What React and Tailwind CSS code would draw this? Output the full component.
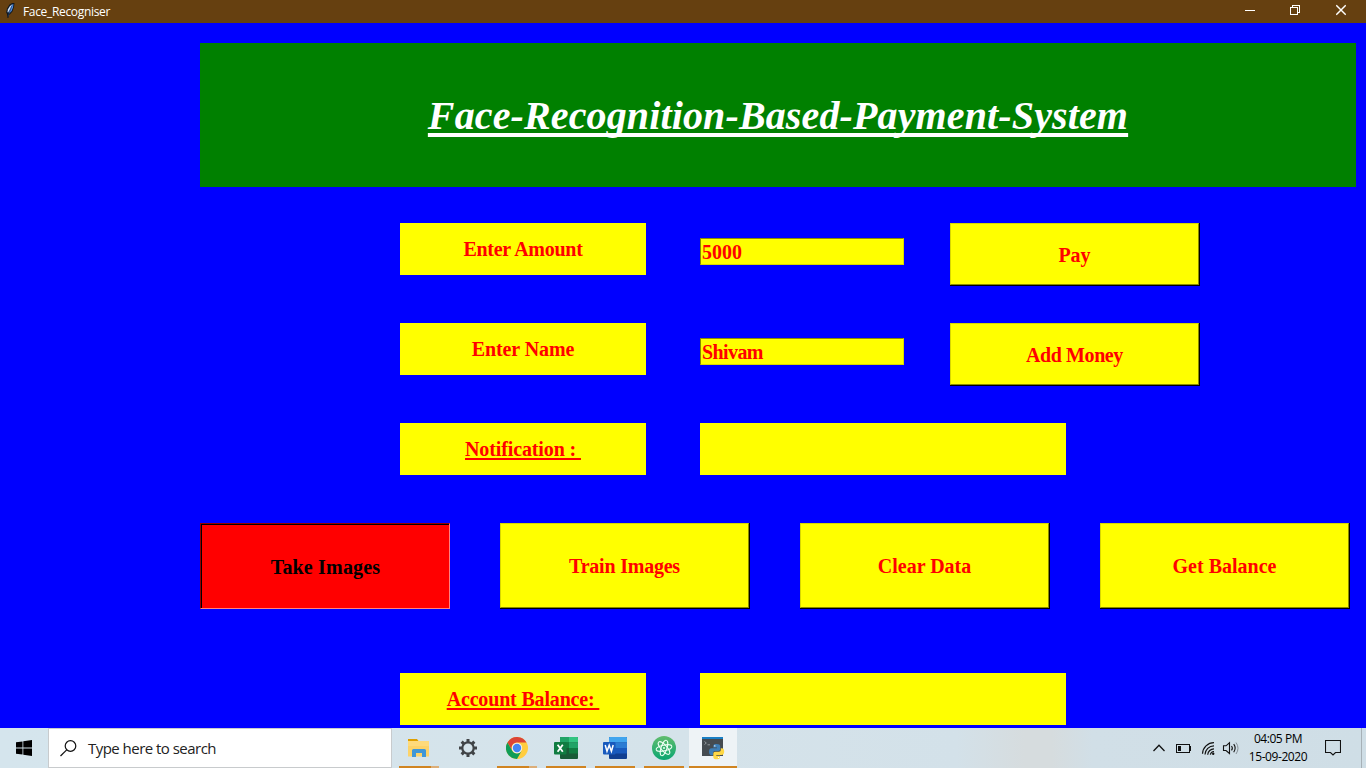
import React from "react";

const serif = "font-['Liberation_Serif',serif]";
const sans = "font-['Open_Sans','Noto_Sans',sans-serif]";

function Label({ children, underline, tracking = "" }) {
  return (
    <div className={"flex h-[52px] w-[246px] shrink-0 items-center justify-center bg-[#ffff00] text-[#ff0000] " + tracking}>
      <span className={underline ? "whitespace-pre underline decoration-2 underline-offset-2" : "whitespace-pre"}>{children}</span>
    </div>
  );
}

function Entry({ value, tracking = "" }) {
  return (
    <div
      className={
        "ml-[54px] mt-[15px] flex h-[27px] w-[204px] shrink-0 items-center border border-b-[#d8d800] border-l-[#8a8a00] border-r-[#d8d800] border-t-[#8a8a00] bg-[#ffff00] pl-px text-[#ff0000] " +
        tracking
      }
    >
      {value}
    </div>
  );
}

function Button({ children, tall, tracking = "" }) {
  return (
    <button
      className={
        (tall ? "h-[86px]" : "h-[63px]") +
        " w-[250px] shrink-0 border-b border-r border-black bg-[#ffff00] text-[#ff0000] " +
        tracking
      }
    >
      <span
        className={
          "flex h-full w-full items-center justify-center border border-b-[#8a8a00] border-l-[#d8d800] border-r-[#8a8a00] border-t-[#d8d800] " +
          (tall ? "" : "pt-[2px]")
        }
      >
        {children}
      </span>
    </button>
  );
}

function PressedButton({ children }) {
  return (
    <button className="h-[86px] w-[250px] shrink-0 border border-b-[#ff8080] border-l-[#900000] border-r-[#ff8080] border-t-[#900000] bg-[#ff0000] tracking-[0.18px] text-black">
      <span className="flex h-full w-full items-center justify-center border-l border-t border-black">
        {children}
      </span>
    </button>
  );
}

function Feather() {
  return (
    <svg width="12" height="20" viewBox="0 0 12 20" className="ml-1">
      <path d="M3.5 18 3 14 2.2 12.5 3 8.5 5.5 4.5 8 3H10.5L10 7 8.5 11.5 6 14.3 4.8 15 4.4 18Z" fill="#101820" />
      <path d="M7.5 5 9.4 4 9 7.5 7.6 11 5.2 13.6 4.6 13Z" fill="#4f8de0" />
      <path d="M3.4 12.3 4 9.2 6 6 8.3 4.2 6.8 7.6 4.3 12.2Z" fill="#cfe3ff" />
      <path d="M8 5.5 4 16.5" stroke="#1f3b68" strokeWidth=".7" />
    </svg>
  );
}

function TitleBar() {
  return (
    <header className="flex h-[23px] w-full bg-[#664010] text-white">
      <Feather />
      <span className={"ml-[7px] w-[120px] text-[12px] leading-[23px] tracking-[-0.33px] " + sans}>Face_Recogniser</span>
      <svg width="10" height="20" viewBox="0 0 10 20" className="ml-auto mr-[35px]" shapeRendering="crispEdges">
        <path d="M0 10.5H10" stroke="#fff" />
      </svg>
      <svg width="10" height="20" viewBox="0 0 10 20" className="mr-[36px]" fill="none" stroke="#fff" shapeRendering="crispEdges">
        <path d="M.5 7.5H7.5V14.5H.5ZM2.5 7.5V5.5H9.5V12.5H7.5" />
      </svg>
      <svg width="10" height="20" viewBox="0 0 10 20" className="mr-5" fill="none" stroke="#fff" strokeWidth="1.3">
        <path d="M.3 5.3 9.7 14.7M9.7 5.3.3 14.7" />
      </svg>
    </header>
  );
}

function FolderIcon() {
  return (
    <svg width="22" height="20" viewBox="0 0 22 20">
      <path d="M0 1H9L10.5 3H0Z" fill="#dfa000" />
      <path d="M0 3H21V18.5H0Z" fill="#fdd368" />
      <path d="M0 3H21V8H0Z" fill="#ffe089" opacity=".6" />
      <path d="M4 19V12.5Q4 11 5.5 11H16.5Q18 11 18 12.5V19H14V15H8V19Z" fill="#3f97d8" />
    </svg>
  );
}

function GearIcon() {
  return (
    <svg width="20" height="20" viewBox="0 0 20 20" fill="none" stroke="#404447">
      <circle cx="10" cy="10" r="5.7" strokeWidth="2.2" />
      <path
        d="M10 1V4.2M10 15.8V19M1 10H4.2M15.8 10H19M3.64 3.64 5.9 5.9M14.1 14.1 16.36 16.36M3.64 16.36 5.9 14.1M14.1 5.9 16.36 3.64"
        strokeWidth="3"
      />
    </svg>
  );
}

function ChromeIcon() {
  return (
    <svg width="22" height="22" viewBox="0 0 22 22">
      <circle cx="11" cy="11" r="11" fill="#ffcd40" />
      <path d="M1.47 5.5A11 11 0 0 1 20.53 5.5H11A5.5 5.5 0 0 0 6.24 13.75Z" fill="#db4437" />
      <path d="M1.47 5.5A11 11 0 0 0 11 22L15.76 13.75A5.5 5.5 0 0 1 6.24 13.75Z" fill="#109d58" />
      <circle cx="11" cy="11" r="5.2" fill="#f1f1f1" />
      <circle cx="11" cy="11" r="4.2" fill="#4285f4" />
    </svg>
  );
}

function ExcelIcon() {
  return (
    <svg width="24" height="22" viewBox="0 0 24 22">
      <rect x="6" y="0" width="18" height="22" rx="1" fill="#185c37" />
      <path d="M6 1Q6 0 7 0H15V5.5H6Z" fill="#21a366" />
      <path d="M15 0H23Q24 0 24 1V5.5H15Z" fill="#33c481" />
      <path d="M6 5.5H15V11H6Z" fill="#107c41" />
      <path d="M15 5.5H24V11H15Z" fill="#21a366" />
      <path d="M15 11H24V16.5H15Z" fill="#107c41" />
      <rect x="0" y="5" width="12.5" height="12.5" rx="1" fill="#107c41" />
      <path d="M3.6 7.8 8.8 14.8M8.8 7.8 3.6 14.8" stroke="#fff" strokeWidth="1.8" />
    </svg>
  );
}

function WordIcon() {
  return (
    <svg width="24" height="22" viewBox="0 0 24 22">
      <rect x="6" y="0" width="18" height="22" rx="1" fill="#103f91" />
      <path d="M6 1Q6 0 7 0H23Q24 0 24 1V5.5H6Z" fill="#41a5ee" />
      <path d="M6 5.5H24V11H6Z" fill="#2b7cd3" />
      <path d="M6 11H24V16.5H6Z" fill="#185abd" />
      <rect x="0" y="5" width="12.5" height="12.5" rx="1" fill="#185abd" />
      <path d="M2.2 8 4 14.3 6.2 8.2 8.4 14.3 10.2 8" stroke="#fff" strokeWidth="1.5" fill="none" />
    </svg>
  );
}

function AtomIcon() {
  return (
    <svg width="24" height="24" viewBox="0 0 24 24" fill="none" stroke="#edfff3" strokeWidth="1">
      <defs>
        <linearGradient id="atomFill" x2="0" y2="1">
          <stop stopColor="#61bd6e" />
          <stop offset="1" stopColor="#0aa671" />
        </linearGradient>
      </defs>
      <circle cx="12" cy="12" r="12" fill="url(#atomFill)" stroke="none" />
      <ellipse cx="12" cy="12" rx="8" ry="2.9" transform="rotate(-12 12 12)" />
      <ellipse cx="12" cy="12" rx="8" ry="2.9" transform="rotate(48 12 12)" />
      <ellipse cx="12" cy="12" rx="8" ry="2.9" transform="rotate(108 12 12)" />
      <circle cx="12" cy="12" r="1" fill="#edfff3" stroke="none" />
    </svg>
  );
}

function PythonWindowIcon() {
  return (
    <svg width="24" height="24" viewBox="0 0 24 24">
      <path d="M1 1H22V20H1Z" fill="#454b50" />
      <path d="M1 1H22V3H1Z" fill="#1a7fc4" />
      <path d="M3.5 5.5 5.3 7 3.5 8.5M6.5 8.8H9" stroke="#a5abaf" fill="none" strokeWidth=".8" />
      <path d="M15.5 8C12 8 12.3 9.6 12.3 11.5H16V12.3H10.8C8.5 12.3 8 14 8 15.8 8 18 9 19.2 10.5 19.2H12V17Q12 15 14 15H17.5Q19.2 15 19.2 13.3V10Q19.2 8 15.5 8Z" fill="#3e7eb5" />
      <path d="M15.7 23.3C19.2 23.3 19 21.8 19 19.8H15.3V19H20.5C22.5 19 23.2 17.4 23.2 15.5 23.2 13.4 22.4 12.2 20.8 12.2H19.8V14Q19.8 15.8 18 15.8H14Q12.3 15.8 12.3 17.5V21Q12.3 23.3 15.7 23.3Z" fill="#ffd845" />
      <circle cx="13.8" cy="9.9" r=".7" fill="#fff" />
      <circle cx="17.5" cy="21.4" r=".7" fill="#fff" />
    </svg>
  );
}

function TaskItem({ children, state }) {
  return (
    <div className={"flex h-10 w-12 flex-col items-center " + (state === "active" ? "bg-[#eef3f6]" : "")}>
      <div className="flex h-[38px] items-center pt-[2px]">{children}</div>
      {state === "grouped" && (
        <div className="flex h-[2px] w-10">
          <span className="h-full w-8 bg-[#d08421]" />
          <span className="h-full w-2 bg-[#dcae78]" />
        </div>
      )}
      {state === "open" && <div className="h-[2px] w-10 bg-[#d08421]" />}
      {state === "active" && <div className="h-[2px] w-12 bg-[#d08421]" />}
    </div>
  );
}

function Tray() {
  return (
    <div className="ml-auto flex h-10 w-[213px] items-center">
      <svg width="86" height="20" viewBox="0 0 86 20" fill="none" stroke="#111" strokeWidth="1.3">
        <path d="M.5 13 6 7.3 11.5 13" />
        <g shapeRendering="crispEdges">
          <path d="M23.5 6.5H36.5V14.5H23.5Z" strokeWidth="1" />
          <path d="M37 8.5H37.5V12.5H37" strokeWidth="1" />
          <path d="M25 8H28V13H25Z" fill="#111" stroke="none" />
        </g>
        <g strokeWidth="1.2">
          <path d="M49.5 15.8A11.5 11.5 0 0 1 61 4.7" />
          <path d="M52 16.5A9 9 0 0 1 61 7.8" />
          <path d="M54.7 16.7A6.3 6.3 0 0 1 61 10.8" />
          <path d="M57.3 16.7A4 4 0 0 1 61 13.5" />
        </g>
        <circle cx="60.2" cy="15.8" r="1.2" fill="#111" stroke="none" />
        <path d="M70.5 7.8H73L76.5 4.8V15.5L73 12.5H70.5Z" strokeWidth="1.1" />
        <path d="M78.5 8Q80.2 10 78.5 12.3M80.7 6.2Q83.6 10 80.7 14.2" strokeWidth="1.1" />
        <path d="M83 4.5Q87 10.2 83 16" strokeWidth="1" stroke="#899298" />
      </svg>
      <div className={"ml-1 w-[70px] pb-px text-center text-[12px] leading-[18px] text-black " + sans}>
        <div className="tracking-[-0.45px]">04:05 PM</div>
        <div className="tracking-[-0.42px]">15-09-2020</div>
      </div>
      <svg width="16" height="18" viewBox="0 0 16 18" className="ml-3" fill="none" stroke="#111" strokeWidth="1.1">
        <path d="M.5 1.5H15.5V13.5H10.5L8 16 5.5 13.5H.5Z" />
      </svg>
      <div className="ml-auto mr-1 h-10 w-px bg-[#a7b1b7]" />
    </div>
  );
}

function Taskbar() {
  return (
    <footer className="flex h-10 w-full items-start bg-[linear-gradient(90deg,#d5e5ed_0%,#d5e3ea_50%,#d3e1e9_70%,#d6dcde_75%,#d6dcde_77%,#d1dfe7_80%,#cfdee6_100%)]">
      <div className="flex h-10 w-12 items-center justify-center">
        <svg width="16" height="16" viewBox="0 0 16 16" fill="#000">
          <path d="M0 2.3 6.5 1.4V7.6H0ZM7.3 1.2 16 0V7.6H7.3ZM0 8.4H6.5V14.6L0 13.7ZM7.3 8.4H16V16L7.3 14.8Z" />
        </svg>
      </div>
      <div className="flex h-10 w-[344px] items-center border border-[#c8cbcd] bg-white">
        <svg width="17" height="17" viewBox="0 0 17 17" className="ml-[11px]" fill="none" stroke="#111" strokeWidth="1.2">
          <circle cx="10.5" cy="6" r="5.3" />
          <path d="M6.7 9.8.5 16" />
        </svg>
        <span className={"ml-[11px] text-[15px] leading-5 tracking-[-0.53px] text-[#222] " + sans}>Type here to search</span>
      </div>
      <nav className="ml-[3px] flex gap-px">
        <TaskItem state="grouped"><FolderIcon /></TaskItem>
        <TaskItem><GearIcon /></TaskItem>
        <TaskItem state="grouped"><ChromeIcon /></TaskItem>
        <TaskItem state="open"><ExcelIcon /></TaskItem>
        <TaskItem state="open"><WordIcon /></TaskItem>
        <TaskItem state="open"><AtomIcon /></TaskItem>
        <TaskItem state="active"><PythonWindowIcon /></TaskItem>
      </nav>
      <Tray />
    </footer>
  );
}

export default function App() {
  return (
    <div className="flex h-[768px] w-[1366px] flex-col overflow-hidden bg-[#0000ff]">
      <TitleBar />
      <main className={"flex h-[705px] flex-col pt-5 text-[20px] font-bold leading-6 " + serif}>
        <h1 className="ml-[200px] flex h-[144px] w-[1156px] items-center justify-center bg-[#008000] pt-[2px] text-[40px] italic leading-[46px] tracking-[0.13px] text-white">
          <span className="underline decoration-4 underline-offset-4 [text-decoration-skip-ink:none]">Face-Recognition-Based-Payment-System</span>
        </h1>
        <div className="mt-9 flex h-[100px] items-start pl-[400px]">
          <Label tracking="tracking-[-0.27px]">Enter Amount</Label>
          <Entry value="5000" />
          <div className="ml-[46px] flex"><Button>Pay</Button></div>
        </div>
        <div className="flex h-[100px] items-start pl-[400px]">
          <Label tracking="tracking-[-0.1px]">Enter Name</Label>
          <Entry value="Shivam" tracking="tracking-[-0.6px]" />
          <div className="ml-[46px] flex"><Button tracking="tracking-[-0.42px]">Add Money</Button></div>
        </div>
        <div className="flex h-[100px] items-start pl-[400px]">
          <Label underline tracking="tracking-[-0.12px]">{"Notification : "}</Label>
          <div className="ml-[54px] h-[52px] w-[366px] bg-[#ffff00]" />
        </div>
        <div className="flex h-[150px] items-start gap-[50px] pl-[200px]">
          <PressedButton>Take Images</PressedButton>
          <Button tall tracking="tracking-[-0.22px]">Train Images</Button>
          <Button tall>Clear Data</Button>
          <Button tall>Get Balance</Button>
        </div>
        <div className="flex items-start pl-[400px]">
          <Label underline tracking="tracking-[-0.17px]">{"Account Balance: "}</Label>
          <div className="ml-[54px] h-[52px] w-[366px] bg-[#ffff00]" />
        </div>
      </main>
      <Taskbar />
    </div>
  );
}
